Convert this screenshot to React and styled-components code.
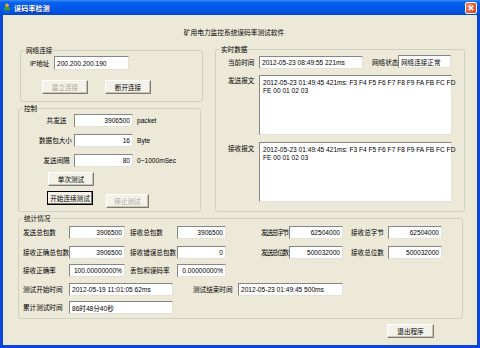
import React from 'react'
import styled, { createGlobalStyle } from 'styled-components'

const GlobalStyle = createGlobalStyle`
	html, body {
		margin: 0;
		padding: 0;
		background: #fff;
	}
	body {
		font-family: "Liberation Sans", "Noto Sans CJK SC", sans-serif;
		font-size: 6.6px;
		color: #000;
	}
	* {
		box-sizing: border-box;
	}
`

const sendText = '2012-05-23 01:49:45 421ms: F3 F4 F5 F6 F7 F8 F9 FA FB FC FD'

const statRows = [
	{
		mt: 7,
		cells: [
			['发送总包数', '3906500'],
			['接收总包数', '3906500'],
			['发送总字节', '62504000'],
			['接收总字节', '62504000'],
		],
	},
	{
		mt: 7,
		cells: [
			['接收正确总包数', '3906500'],
			['接收错误总包数', '0'],
			['发送总位数', '500032000'],
			['接收总位数', '500032000'],
		],
	},
	{
		mt: 5,
		cells: [
			['接收正确率', '100.00000000%'],
			['丢包和误码率', '0.00000000%'],
		],
	},
]

// label width, gap before label, input width for the four stat columns
const statCols = [
	{ ml: 0, lw: 46, w: 56 },
	{ ml: 5, lw: 47, w: 49 },
	{ ml: 35, lw: 28, w: 54, tight: true },
	{ ml: 8, lw: 37, w: 54 },
]

function App() {
	return (
		<>
			<GlobalStyle />
			<Window>
				<TitleBar>
					<AppIcon width='8' height='10' viewBox='0 0 8 10'>
						<circle cx='4' cy='2.2' r='1.8' fill='#F3A53A' />
						<rect x='1' y='4' width='6' height='3.5' rx='1' fill='#3E9B3A' />
						<rect x='1.5' y='7.5' width='2' height='2.5' fill='#2F5BC8' />
						<rect x='4.5' y='7.5' width='2' height='2.5' fill='#2F5BC8' />
					</AppIcon>
					<Title>误码率检测</Title>
					<CloseButton>
						<svg width='6' height='6' viewBox='0 0 6 6'>
							<path d='M0.7 0.7 L5.3 5.3 M5.3 0.7 L0.7 5.3' stroke='#fff' strokeWidth='1.3' />
						</svg>
					</CloseButton>
				</TitleBar>
				<Body>
					<Heading>矿用电力监控系统误码率测试软件</Heading>
					<TopRow>
						<LeftCol>
							<GroupBox $w={183} $h={52} $ml={2} $mt={1}>
								<GroupTitle>网络连接</GroupTitle>
								<FieldRow $mt={5} $pl={9}>
									<Label $w={24}>IP地址</Label>
									<TextBox readOnly value='200.200.200.190' $w={75} $h={14} />
								</FieldRow>
								<FieldRow $mt={10} $pl={21}>
									<Button disabled $w={46}>建立连接</Button>
									<Button $w={46} $ml={17}>断开连接</Button>
								</FieldRow>
							</GroupBox>
							<GroupBox $w={183} $h={104} $mt={6}>
								<GroupTitle>控制</GroupTitle>
								<FieldRow $mt={5} $pl={20}>
									<Label $w={35} $center>共发送</Label>
									<TextBox readOnly value='3906500' $w={59} $align='right' />
									<Unit>packet</Unit>
								</FieldRow>
								<FieldRow $mt={7} $pl={20}>
									<Label $w={35}>数据包大小</Label>
									<TextBox readOnly value='16' $w={59} $align='right' />
									<Unit>Byte</Unit>
								</FieldRow>
								<FieldRow $mt={7} $pl={20}>
									<Label $w={35} $center>发送间隔</Label>
									<TextBox readOnly value='80' $w={59} $align='right' />
									<Unit>0~1000mSec</Unit>
								</FieldRow>
								<FieldRow $mt={5} $pl={29}>
									<Button $w={46}>单次测试</Button>
								</FieldRow>
								<FieldRow $mt={5} $pl={28} $top>
									<Button $w={46} $primary>开始连续测试</Button>
									<Button disabled $w={43} $ml={13} $mt={3}>停止测试</Button>
								</FieldRow>
							</GroupBox>
						</LeftCol>
						<GroupBox $w={250} $h={163} $ml={13}>
							<GroupTitle>实时数据</GroupTitle>
							<FieldRow $mt={6} $pl={12}>
								<Label $w={31}>当前时间</Label>
								<TextBox readOnly value='2012-05-23 08:49:55 221ms' $w={104} />
								<Label $w={26} $ml={9}>网络状态</Label>
								<TextBox readOnly value='网络连接正常' $w={53} $mt={-2} />
							</FieldRow>
							<FieldRow $mt={6} $pl={12} $top>
								<Label $w={31} $mt={1}>发送报文</Label>
								<Memo>
									{sendText}
									<br />
									FE 00 01 02 03
								</Memo>
							</FieldRow>
							<FieldRow $mt={7} $pl={12} $top>
								<Label $w={31} $mt={2}>接收报文</Label>
								<Memo>
									{sendText}
									<br />
									FE 00 01 02 03
								</Memo>
							</FieldRow>
						</GroupBox>
					</TopRow>
					<GroupBox $w={445} $h={101} $ml={15} $mt={6}>
						<GroupTitle>统计情况</GroupTitle>
						{statRows.map((row, i) => (
							<FieldRow key={i} $mt={row.mt} $pl={4}>
								{row.cells.map(([label, value], j) => (
									<React.Fragment key={label}>
										<Label
											$w={statCols[j].lw}
											$ml={statCols[j].ml}
											$tight={statCols[j].tight}
										>
											{label}
										</Label>
										<TextBox readOnly value={value} $w={statCols[j].w} $align='right' />
									</React.Fragment>
								))}
							</FieldRow>
						))}
						<FieldRow $mt={6} $pl={4}>
							<Label $w={46}>测试开始时间</Label>
							<TextBox readOnly value='2012-05-19 11:01:05 62ms' $w={104} />
							<Label $w={45} $ml={20}>测试结束时间</Label>
							<TextBox readOnly value='2012-05-23 01:49:45 500ms' $w={105} />
						</FieldRow>
						<FieldRow $mt={5} $pl={4}>
							<Label $w={46}>累计测试时间</Label>
							<TextBox readOnly value='86时48分40秒' $w={104} />
						</FieldRow>
					</GroupBox>
					<Footer>
						<Button $w={47}>退出程序</Button>
					</Footer>
				</Body>
			</Window>
		</>
	)
}

export default App

const Window = styled.div`
	width: 480px;
	height: 348px;
	display: flex;
	flex-direction: column;
	background: #0a47d9;
	overflow: hidden;
`
const TitleBar = styled.div`
	height: 15px;
	flex-shrink: 0;
	display: flex;
	align-items: center;
	padding: 0 3px;
	background: linear-gradient(to bottom, #3d8ff7 0%, #0a63ee 14%, #0158e9 45%, #0053e1 80%, #0246ce 100%);
`
const AppIcon = styled.svg`
	flex-shrink: 0;
`
const Title = styled.div`
	margin-left: 3px;
	color: #fff;
	font-weight: bold;
	font-size: 7px;
	letter-spacing: 0.2px;
	text-shadow: 1px 1px 0 #0f2a8a;
`
const CloseButton = styled.div`
	margin-left: auto;
	width: 12px;
	height: 12px;
	border: 1px solid #fff;
	border-radius: 2px;
	display: flex;
	align-items: center;
	justify-content: center;
	background: radial-gradient(circle at 35% 35%, #f09a7c 0%, #e2603c 50%, #c6411d 100%);
`
const Body = styled.div`
	flex: 1;
	margin: 0 3px 3px;
	background: #ece9d8;
	display: flex;
	flex-direction: column;
`
const Heading = styled.div`
	margin-top: 13px;
	height: 9px;
	line-height: 9px;
	padding-right: 12px;
	text-align: center;
	font-size: 6.7px;
`
const TopRow = styled.div`
	margin-top: 12px;
	padding-left: 15px;
	display: flex;
	align-items: flex-start;
`
const LeftCol = styled.div`
	width: 184px;
	display: flex;
	flex-direction: column;
`
const GroupBox = styled.div`
	position: relative;
	flex-shrink: 0;
	width: ${(p) => p.$w}px;
	height: ${(p) => p.$h}px;
	margin-left: ${(p) => p.$ml || 0}px;
	margin-top: ${(p) => p.$mt || 0}px;
	border: 1px solid #d0d0bf;
	border-radius: 3px;
	display: flex;
	flex-direction: column;
`
const GroupTitle = styled.span`
	position: absolute;
	top: -5px;
	left: 4px;
	padding: 0 1px;
	line-height: 9px;
	background: #ece9d8;
`
const FieldRow = styled.div`
	display: flex;
	align-items: ${(p) => (p.$top ? 'flex-start' : 'center')};
	margin-top: ${(p) => p.$mt || 0}px;
	padding-left: ${(p) => p.$pl || 0}px;
`
const Label = styled.span`
	flex-shrink: 0;
	width: ${(p) => p.$w}px;
	margin-left: ${(p) => p.$ml || 0}px;
	margin-top: ${(p) => p.$mt || 0}px;
	text-align: ${(p) => (p.$center ? 'center' : 'left')};
	letter-spacing: ${(p) => (p.$tight ? '-1.2px' : '0')};
	white-space: nowrap;
	line-height: 9px;
`
const TextBox = styled.input`
	flex-shrink: 0;
	width: ${(p) => p.$w}px;
	height: ${(p) => p.$h || 13}px;
	margin: ${(p) => p.$mt || 0}px 0 0 0;
	padding: 0 2px;
	border: 1px solid;
	border-color: #868686 #e4e2d6 #e4e2d6 #868686;
	background: #fff;
	font: inherit;
	color: #000;
	text-align: ${(p) => p.$align || 'left'};
	outline: none;
`
const Unit = styled.span`
	margin-left: 4px;
	white-space: nowrap;
`
const Memo = styled.div`
	width: 193px;
	height: 60px;
	padding: 3px 3px;
	border: 1px solid;
	border-color: #868686 #e4e2d6 #e4e2d6 #868686;
	background: #fff;
	line-height: 8px;
	white-space: nowrap;
`
const Button = styled.button`
	flex-shrink: 0;
	width: ${(p) => p.$w}px;
	height: 14px;
	margin-left: ${(p) => p.$ml || 0}px;
	margin-top: ${(p) => p.$mt || 0}px;
	padding: 0;
	font: inherit;
	color: ${(p) => (p.disabled ? '#aca899' : '#000')};
	background: #f3f1e8;
	border: 1px solid;
	border-color: #ffffff #7d7b70 #7d7b70 #ffffff;
	outline: ${(p) => (p.$primary ? '1px solid #000' : 'none')};
	outline-offset: -1px;
	box-shadow: ${(p) => (p.$primary ? 'inset -1px -1px 0 #7d7b70' : 'inset -1px -1px 0 #c8c5b8')};
	white-space: nowrap;
`
const Footer = styled.div`
	margin-top: 5px;
	padding-left: 384px;
	display: flex;
`
